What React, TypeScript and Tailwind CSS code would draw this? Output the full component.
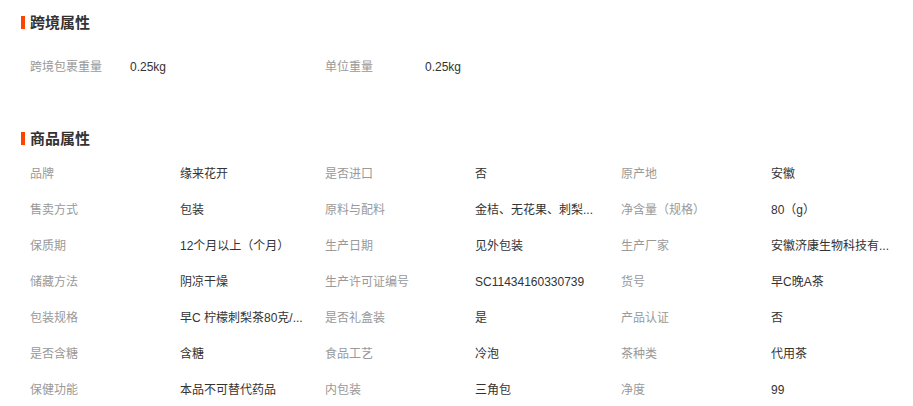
const crossBorder = [
  { label: '跨境包裹重量', value: '0.25kg' },
  { label: '单位重量', value: '0.25kg' },
];

// values are shown already shortened, as on the page
const attrs = [
  ['品牌', '缘来花开'],
  ['是否进口', '否'],
  ['原产地', '安徽'],
  ['售卖方式', '包装'],
  ['原料与配料', '金桔、无花果、刺梨...'],
  ['净含量（规格）', '80（g）'],
  ['保质期', '12个月以上（个月）'],
  ['生产日期', '见外包装'],
  ['生产厂家', '安徽济康生物科技有...'],
  ['储藏方法', '阴凉干燥'],
  ['生产许可证编号', 'SC11434160330739'],
  ['货号', '早C晚A茶'],
  ['包装规格', '早C 柠檬刺梨茶80克/...'],
  ['是否礼盒装', '是'],
  ['产品认证', '否'],
  ['是否含糖', '含糖'],
  ['食品工艺', '冷泡'],
  ['茶种类', '代用茶'],
  ['保健功能', '本品不可替代药品'],
  ['内包装', '三角包'],
  ['净度', '99'],
];

function SectionTitle({ title }: { title: string }) {
  return (
    <div className="flex items-center h-[16px] pl-[21px]">
      <span className="w-[4px] h-[13px] bg-[#ff4400]" />
      <span className="ml-[5px] text-[15px] font-bold text-[#333] leading-none">{title}</span>
    </div>
  );
}

export default function App() {
  return (
    <div
      className="w-[913px] h-[406px] overflow-hidden bg-white pt-[14px]"
      style={{ fontFamily: '"Liberation Sans", "Noto Sans CJK SC", sans-serif' }}
    >
      {/* 跨境属性 */}
      <SectionTitle title="跨境属性" />
      <div className="mt-[19px] flex pl-[30px] h-[36px] items-center text-[12px]">
        {crossBorder.map((item) => (
          <div key={item.label} className="flex items-center">
            <span className="w-[100px] text-[#999]">{item.label}</span>
            <span className="w-[195px] text-[#333]">{item.value}</span>
          </div>
        ))}
      </div>

      {/* 商品属性 */}
      <div className="mt-[45px]">
        <SectionTitle title="商品属性" />
      </div>
      <div className="mt-[10px] pl-[30px] grid grid-cols-[295px_296px_295px] text-[12px]">
        {attrs.map(([label, value]) => (
          <div key={label} className="flex items-center h-[36px]">
            <span className="w-[150px] shrink-0 text-[#999]">{label}</span>
            <span className="whitespace-nowrap text-[#333]">{value}</span>
          </div>
        ))}
      </div>
    </div>
  );
}
